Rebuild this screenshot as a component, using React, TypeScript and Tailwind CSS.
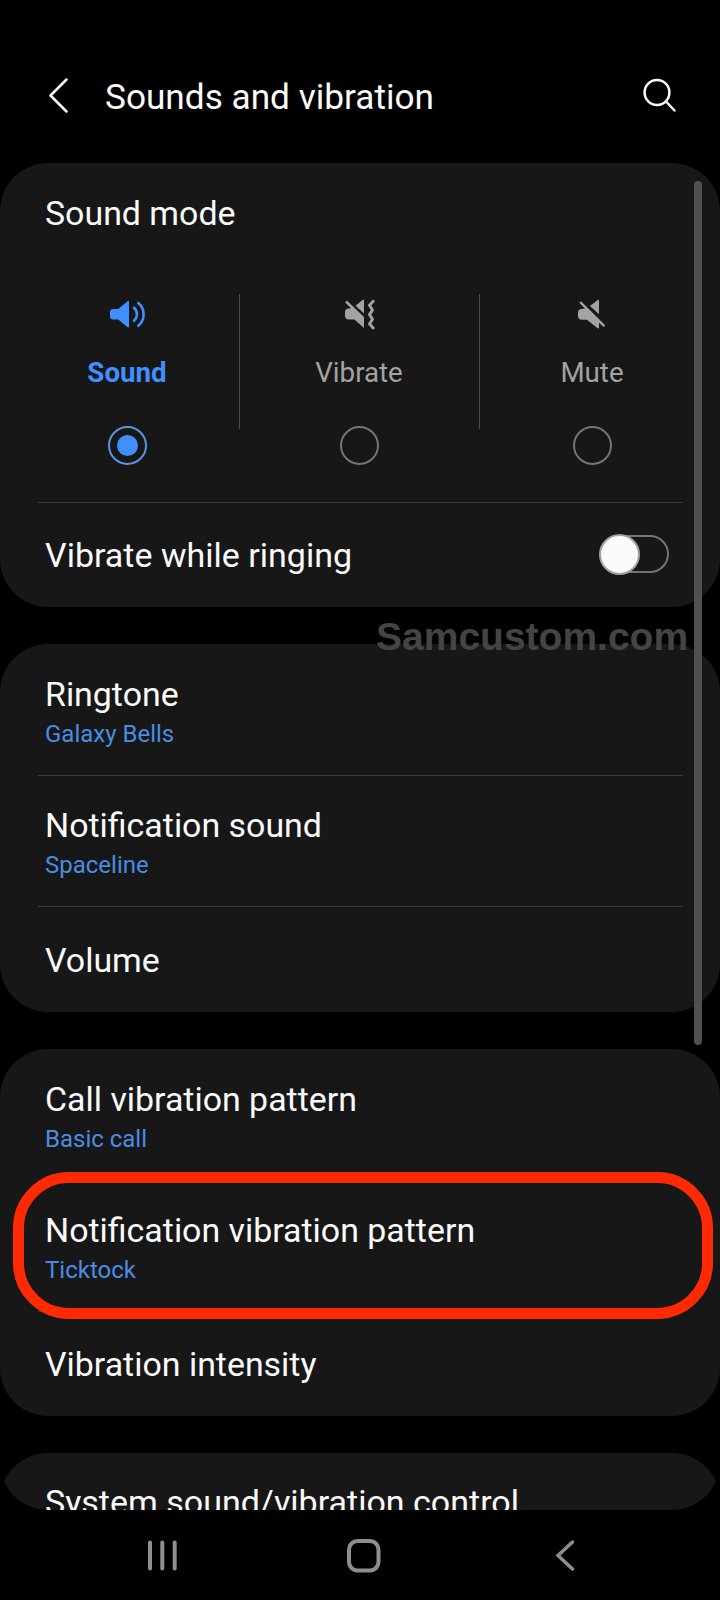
import { useState } from 'react';
import type { ReactNode } from 'react';
import clsx from 'clsx';

type Mode = 'sound' | 'vibrate' | 'mute';

interface RowProps {
    title: string;
    value?: string;
    last?: boolean;
}

function SoundIcon() {
    return (
        <svg width="40" height="32" viewBox="0 0 40 32" fill="none" className="ml-0.5 shrink-0">
            <path d="M5 11h5.3L19.6 3.2Q21 2.2 21 4v24.400Q21 30.200 19.600 29.200L10.300 21.500H5Q2 21.500 2 18.500V14Q2 11 5 11Z" fill="currentColor" />
            <path d="M26 9.800Q29 12.500 29 16.300T26 22.800M30.300 5Q35.600 9.500 35.600 16.400T30.300 27.800" stroke="currentColor" strokeWidth="2.600" strokeLinecap="round" />
        </svg>
    );
}

function VibrateIcon() {
    return (
        <svg width="32" height="32" viewBox="0 0 32 32" fill="none" className="ml-0.5 shrink-0">
            <path d="M1.200 4.400 2.900 2.600 20 19V30L10.400 21.500H5Q1 21.500 1 17.500V14.500Q1 10.500 4.500 10.500L7 10.300Z" fill="currentColor" />
            <path d="M11.500 7.800 18.800 1.800Q20 1.100 20 2.400V15.500Z" fill="currentColor" />
            <path d="M29.200 3.300 25.500 7.200 28.500 12 25.500 16.600 28.500 21.200 25.500 26 29.200 30" stroke="currentColor" strokeWidth="2.900" strokeLinecap="round" strokeLinejoin="round" />
        </svg>
    );
}

function MuteIcon() {
    return (
        <svg width="32" height="32" viewBox="0 0 32 32" fill="none" className="shrink-0">
            <path d="M3.300 4.800 5 3.200 29.200 27.300 27.600 29 23 24.800V29.500Q23 31.300 21.600 30.200L11 21.700H6Q2 21.700 2 17.700V14.500Q2 11 5.500 11L9 10.600Z" fill="currentColor" />
            <path d="M14 8 21.700 2Q23 1.200 23 2.500V16.300Z" fill="currentColor" />
        </svg>
    );
}

const modes: { id: Mode; label: string; icon: ReactNode; col: string }[] = [
    { id: 'sound', label: 'Sound', icon: <SoundIcon />, col: 'w-[226px] pl-px' },
    { id: 'vibrate', label: 'Vibrate', icon: <VibrateIcon />, col: 'w-[240px] pr-px' },
    { id: 'mute', label: 'Mute', icon: <MuteIcon />, col: 'w-[224px]' },
];

function Card({ children }: { children: ReactNode }) {
    return <section className="rounded-[48px] bg-[#171717]">{children}</section>;
}

function Divider() {
    return <div className="mr-[37px] -mb-px ml-[38px] h-px bg-[#3a3a3a]" />;
}

function Row({ title, value, last }: RowProps) {
    return (
        <>
            <div
                className={clsx(
                    'flex flex-col px-[45px]',
                    value ? 'h-[131px] pt-7' : 'h-[105.5px] justify-center pt-1'
                )}
            >
                <span className="text-[33.9px] leading-[46px]">{title}</span>
                {value && <span className="text-[24px] leading-[32px] text-[#4a8ce4]">{value}</span>}
            </div>
            {!last && <Divider />}
        </>
    );
}

export default function App() {
    const [mode, setMode] = useState<Mode>('sound');
    const [vibrateRinging, setVibrateRinging] = useState(false);

    return (
        <div className="relative flex h-[1600px] w-[720px] flex-col overflow-hidden bg-black font-['Roboto',sans-serif] text-[#fafafa]">
            <header className="flex h-[163px] items-start pt-[74px] pl-[45px] pr-10">
                <svg width="28" height="44" viewBox="0 0 28 44" fill="none" className="shrink-0">
                    <path d="M21.500 5.500 5.500 21.500 21.500 37.500" stroke="currentColor" strokeWidth="2.500" strokeLinecap="round" strokeLinejoin="round" />
                </svg>
                <h1 className="ml-8 flex-1 text-[35.2px] leading-[46px]">Sounds and vibration</h1>
                <svg width="40" height="44" viewBox="0 0 40 44" fill="none" className="shrink-0">
                    <circle cx="17" cy="18.500" r="12.400" stroke="currentColor" strokeWidth="2.500" />
                    <path d="M26 27.500 34.500 36.500" stroke="currentColor" strokeWidth="2.500" strokeLinecap="round" />
                </svg>
            </header>

            {/* scrolling list, cut off above the navigation bar */}
            <main className="flex h-[1347px] flex-col gap-[37px] overflow-hidden rounded-b-[48px]">
                <Card>
                    <h2 className="px-[45px] pt-7 text-[33.9px] leading-[46px]">Sound mode</h2>
                    <div className="flex h-[265px] px-[14px] pt-[57px]">
                        {modes.map((m, i) => (
                            <button
                                key={m.id}
                                onClick={() => setMode(m.id)}
                                className={clsx(
                                    'flex h-[135px] flex-col items-center pt-1',
                                    m.col,
                                    i < 2 && 'border-r border-[#4c4c4c]',
                                    mode === m.id ? 'font-bold text-[#418fff]' : 'text-[#a3a3a3]'
                                )}
                            >
                                {m.icon}
                                <span className="mt-6 text-[27.7px] leading-[38px]">{m.label}</span>
                                <span
                                    className={clsx(
                                        'mt-[34px] flex size-[39px] shrink-0 items-center justify-center rounded-full border-2',
                                        mode === m.id ? 'border-[#5b93e4]' : 'border-[#747474]'
                                    )}
                                >
                                    {mode === m.id && <span className="size-[21px] rounded-full bg-[#418fff]" />}
                                </span>
                            </button>
                        ))}
                    </div>
                    <Divider />
                    <div className="flex h-[105px] items-center justify-between pl-[45px] pr-[51px]">
                        <span className="text-[34px] leading-[44px]">Vibrate while ringing</span>
                        <button
                            onClick={() => setVibrateRinging(!vibrateRinging)}
                            className={clsx(
                                'mb-px flex h-[38px] w-[69px] items-center rounded-full border-2 border-[#747474]',
                                vibrateRinging && 'justify-end'
                            )}
                        >
                            <span className="-mx-[3px] size-[41px] shrink-0 rounded-full border-2 border-[#a0a0a0] bg-[#fafafa]" />
                        </button>
                    </div>
                </Card>

                <Card>
                    <Row title="Ringtone" value="Galaxy Bells" />
                    <Row title="Notification sound" value="Spaceline" />
                    <Row title="Volume" last />
                </Card>

                <Card>
                    <Row title="Call vibration pattern" value="Basic call" />
                    <Row title="Notification vibration pattern" value="Ticktock" />
                    <Row title="Vibration intensity" last />
                </Card>

                <Card>
                    <div className="h-[131px] px-[45px] pt-[27px] text-[34px] leading-[44px]">
                        System sound/vibration control
                    </div>
                </Card>
            </main>

            <nav className="flex h-[90px] items-start pt-[29px] pl-[146px] text-[#8e8e8e]">
                <svg width="32" height="34" viewBox="0 0 32 34" fill="none">
                    <path d="M4 3.500V29.500M16.300 3.500V29.500M28.700 3.500V29.500" stroke="currentColor" strokeWidth="4" strokeLinecap="round" />
                </svg>
                <svg width="34" height="34" viewBox="0 0 34 34" fill="none" className="ml-[169px]">
                    <rect x="2" y="2" width="29.500" height="29.500" rx="8.500" stroke="currentColor" strokeWidth="4" />
                </svg>
                <svg width="34" height="34" viewBox="0 0 34 34" fill="none" className="ml-[173px]">
                    <path d="M18.500 3 4 16.500 18.500 30" stroke="currentColor" strokeWidth="3.500" strokeLinecap="round" />
                </svg>
            </nav>

            {/* overlays */}
            <div className="absolute top-[181px] left-[694px] h-[864px] w-2 rounded-full bg-[#505050]" />
            <div className="absolute top-[614px] left-[376px] font-['Liberation_Sans',sans-serif] text-[39px] leading-[46px] font-bold text-[#444444]">
                Samcustom.com
            </div>
            <div className="absolute top-[1172px] left-[13px] h-[147px] w-[700px] rounded-[56px] border-[11px] border-[#ff2a04]" />
        </div>
    );
}
